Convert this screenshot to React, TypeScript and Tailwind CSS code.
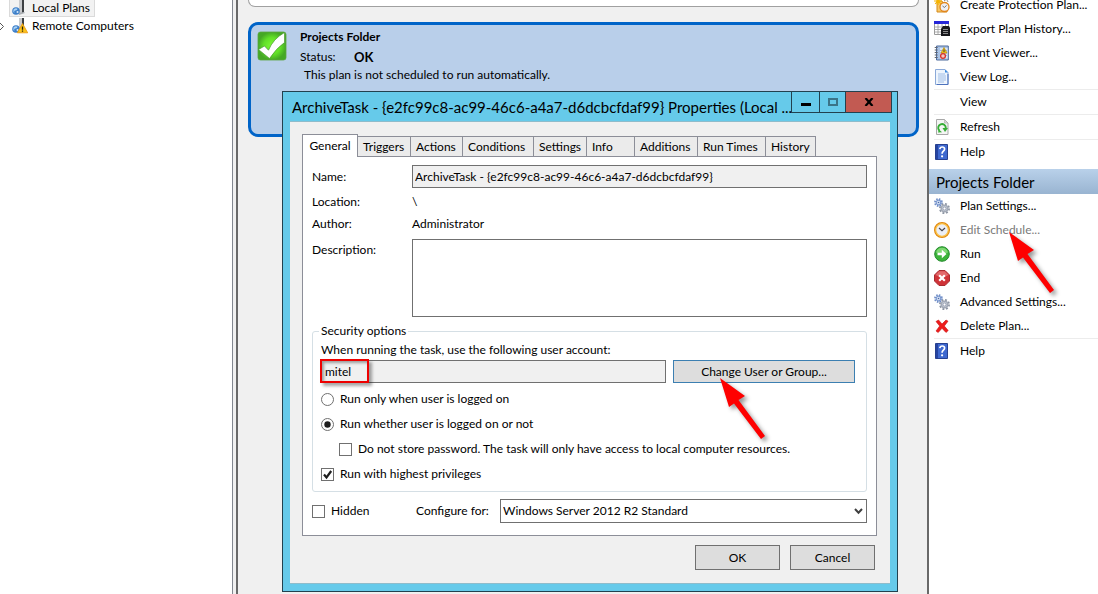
import React from 'react';

const tabs = [
  { label: 'Triggers', width: 'w-[53px]' },
  { label: 'Actions', width: 'w-[52px]' },
  { label: 'Conditions', width: 'w-[71px]' },
  { label: 'Settings', width: 'w-[53px]' },
  { label: 'Info', width: 'w-[48px]' },
  { label: 'Additions', width: 'w-[63px]' },
  { label: 'Run Times', width: 'w-[68px]' },
  { label: 'History', width: 'w-[50px]' },
];

/* ---------- Icons ---------- */

const ServerShape = () => (
  <>
    <path d="M7 0h5v12l-5 2z" fill="#6d7073" />
    <path d="M7 0h3v13l-3 1z" fill="#c9cbce" />
    <path d="M10 0h2v12l-2 1z" fill="#3d4043" />
    <path d="M6 13l6-1 1 1-6 2z" fill="#a9adb1" />
    <circle cx="4" cy="11" r="3.8" fill="#3d7fc9" />
    <path d="M1.5 9.5q2-2 4-.8q0 1.500-2 1.800t-1 2.500q-1.800-1-1-3.500z" fill="#a9d2f5" />
    <circle cx="5.500" cy="12" r="1" fill="#d5e9fa" />
  </>
);

const ServerIcon = () => (
  <svg width="16" height="16" viewBox="0 0 16 16">
    <ServerShape />
  </svg>
);

const ServerWarningIcon = () => (
  <svg width="16" height="16" viewBox="0 0 16 16">
    <ServerShape />
    <path d="M10.500 5.500L15.700 14.800H5.300z" fill="#fcc419" stroke="#e8940c" strokeWidth=".8" strokeLinejoin="round" />
    <path d="M10.500 8.500v3.200M10.500 12.500v1.300" stroke="#2b2008" strokeWidth="1.300" />
  </svg>
);

const CreatePlanIcon = () => (
  <svg width="16" height="16" viewBox="0 0 16 16">
    <path d="M3 4h5l1 2h4v9H3z" fill="#f7c765" stroke="#d48a1c" />
    <path d="M4 0v8M0 4h8M1.200 1.200l5.600 5.600M6.800 1.200L1.200 6.800" stroke="#f5b400" strokeWidth="1.200" />
    <path d="M10 4q3-3 4 1" stroke="#8b8b8b" fill="none" />
    <circle cx="10.500" cy="10" r="4.500" fill="#eef0f5" stroke="#e2861d" strokeWidth="1.300" />
    <path d="M8.500 9l2 1.500 2-2.200" stroke="#777" fill="none" />
  </svg>
);

const ExportIcon = () => (
  <svg width="16" height="16" viewBox="0 0 16 16">
    <path d="M.5 1.500h14v12H.5z" fill="#fff" stroke="#9a9a9a" />
    <path d="M0 0h15v3H0z" fill="#2626d8" />
    <path d="M1 6h13M1 8.500h13M1 11h13M4 3v10M8 3v10M11.500 3v10" stroke="#9b9b9b" strokeWidth=".8" />
    <path d="M9 5h6l1 2v8H7V8z" fill="#17171b" />
    <path d="M9 8.500h5M9 10.500h5M9 12.500h5" stroke="#a8a8a8" strokeWidth=".8" />
  </svg>
);

const EventIcon = () => (
  <svg width="16" height="16" viewBox="0 0 16 16">
    <path d="M2.500 1h11.800v14H2.500z" fill="#a9c3e6" stroke="#4d6a9c" />
    <path d="M6 3h7.500v10.500H6z" fill="#dbe6f5" />
    <path d="M6 5.500h7M6 8h7M6 10.500h7" stroke="#7f9cc9" strokeWidth=".7" />
    <path d="M.7 2.500h3M.7 5h3M.7 7.500h3M.7 10h3M.7 12.500h3" stroke="#61666f" strokeWidth="1.100" />
    <path d="M10 2.500l3 5.500H7z" fill="#f7c71f" stroke="#b98b00" strokeWidth=".7" />
    <path d="M10 4.500v2.500" stroke="#333" />
    <circle cx="9" cy="11" r="2.400" fill="#f3c8c4" stroke="#d6332a" strokeWidth="1.300" />
  </svg>
);

const LogIcon = () => (
  <svg width="16" height="16" viewBox="0 0 16 16">
    <path d="M1.500.5h9.500l3 3v12H1.500z" fill="#eef5fd" stroke="#8ba9d8" />
    <path d="M11 .5v3h3z" fill="#3b8be0" />
    <path d="M4 5h7M4 7h8M4 9h8M4 11h8M4 13h6" stroke="#9fbde6" />
    <path d="M14 5v10.500H3" stroke="#4d72bd" fill="none" />
  </svg>
);

const RefreshIcon = () => (
  <svg width="16" height="16" viewBox="0 0 16 16">
    <path d="M2.500.5h8l3.500 3.500v11.500H2.500z" fill="#f4f5f4" stroke="#a8a8a8" />
    <path d="M10.500.5v3.500H14z" fill="#d8d8d8" stroke="#a8a8a8" strokeWidth=".6" />
    <path d="M5.300 11.500A3.800 3.800 0 1 1 11.800 9" stroke="#35ad35" strokeWidth="1.900" fill="none" />
    <path d="M8.500 9h5.500l-3 4z" fill="#35ad35" />
    <path d="M4 13.500l4-.2-3-2.800z" fill="#35ad35" />
  </svg>
);

const HelpIcon = () => (
  <svg width="16" height="16" viewBox="0 0 16 16">
    <path d="M1.500.5h12v15h-12z" fill="#3e68cf" stroke="#27408f" />
    <path d="M2 1h2v14H2z" fill="#2544a1" />
    <path d="M5.800 5.200q.3-2.200 2.500-2.200t2.300 2q0 1.300-1.300 2.200T8.100 9.700" stroke="#fff" strokeWidth="1.700" fill="none" />
    <circle cx="8.100" cy="12.300" r="1.100" fill="#fff" />
  </svg>
);

const GearsIcon = () => (
  <svg width="16" height="16" viewBox="0 0 16 16">
    <circle cx="4.500" cy="4.500" r="3.500" fill="none" stroke="#6d8cc6" strokeWidth="1.800" strokeDasharray="1.500 1.250" />
    <circle cx="4.500" cy="4.500" r="2.300" fill="#dbe6f7" stroke="#7b98cf" strokeWidth="1.200" />
    <circle cx="4.500" cy="4.500" r=".8" fill="#4c6aa8" />
    <circle cx="10.500" cy="10.500" r="4.600" fill="none" stroke="#8d95a3" strokeWidth="1.800" strokeDasharray="1.900 1.710" />
    <circle cx="10.500" cy="10.500" r="3.200" fill="#cfd5de" stroke="#a3aab7" strokeWidth="1.500" />
    <circle cx="10.500" cy="10.500" r="1.500" fill="#fff" stroke="#8089a0" strokeWidth=".7" />
  </svg>
);

const ClockIcon = () => (
  <svg width="16" height="16" viewBox="0 0 16 16">
    <circle cx="8" cy="8" r="7.100" fill="#eceef5" stroke="#e0870f" strokeWidth="1.800" />
    <circle cx="8" cy="8" r="6.300" fill="none" stroke="#fbc44a" strokeWidth="1.200" />
    <path d="M5 6l3 2.600L11 6" stroke="#45454d" strokeWidth="1.200" fill="none" />
  </svg>
);

const RunIcon = () => (
  <svg width="16" height="16" viewBox="0 0 16 16">
    <circle cx="8" cy="8" r="7.300" fill="#3cb43a" stroke="#238a2c" />
    <path d="M2 6.500a6.200 6.200 0 0 1 12 0q-6 2-12 0z" fill="#7fd873" />
    <path d="M3.500 6.700h4.300V3.800L12.500 8l-4.700 4.200V9.300H3.500z" fill="#fff" />
  </svg>
);

const EndIcon = () => (
  <svg width="16" height="16" viewBox="0 0 16 16">
    <path d="M5 .5h6L15.500 5v6L11 15.500H5L.5 11V5z" fill="#cf3338" stroke="#a82c30" />
    <path d="M5.300 1.300h5.400L14.500 5q-6 4-13 0z" fill="#e2696b" />
    <path d="M5.200 5.200l5.600 5.600M10.800 5.200l-5.600 5.600" stroke="#fff" strokeWidth="2.200" />
  </svg>
);

const DeleteIcon = () => (
  <svg width="16" height="16" viewBox="0 0 16 16">
    <path d="M2 3.500L4.500 2 8 6l4-4 2 1.200L10.300 8l3.900 4.500-2.200 2L8 10.300 4.200 14.500 2 13l3.700-5z" fill="#ee1c1c" stroke="#c81010" strokeWidth=".6" />
  </svg>
);

const SuccessIcon = () => (
  <svg width="30" height="30" viewBox="0 0 30 30" className="shrink-0">
    <defs>
      <radialGradient id="okFill">
        <stop offset="0" stopColor="#7dfa35" />
        <stop offset=".6" stopColor="#62e028" />
        <stop offset="1" stopColor="#45a825" />
      </radialGradient>
    </defs>
    <rect x="1" y="1" width="28" height="28" rx="2.500" fill="url(#okFill)" stroke="#5aa53f" strokeWidth=".8" />
    <path d="M1.500 18.500l6-3.500 4 4.200Q16 8 27.500 1.500v10Q19.500 17 12.500 27.500z" fill="#fff" stroke="#4c9a34" strokeWidth=".7" />
  </svg>
);

/* Red pointer drawn over the controls, tip in the top left corner */
const Arrow = ({ className }: { className: string }) => (
  <svg width="52" height="68" viewBox="0 0 52 68" className={`pointer-events-none absolute z-10 ${className}`}>
    <path
      d="M0 0L25 18L18.500 22L45 58L41 61L14 25.500L9 29z"
      fill="#fe0000"
      className="drop-shadow-[3px_3px_2px_rgba(0,0,0,0.4)]"
    />
  </svg>
);

/* ---------- Small building blocks ---------- */

interface ActionProps {
  icon?: React.ReactNode;
  label: string;
  disabled?: boolean;
}

const Action: React.FC<ActionProps> = ({ icon, label, disabled }) => (
  <button
    type="button"
    disabled={disabled}
    className="flex h-6 w-full items-center gap-2.5 pl-[5px] text-left whitespace-nowrap disabled:text-[#7a7a7a]"
  >
    <span className="w-4 shrink-0">{icon}</span>
    {label}
  </button>
);

const Separator = () => <div className="ml-[5px] h-px bg-[#ececec]" />;

interface ChoiceProps {
  type: 'radio' | 'checkbox';
  label: string;
  checked?: boolean;
}

const Choice: React.FC<ChoiceProps> = ({ type, label, checked }) => (
  <label className="flex items-center gap-1.5 whitespace-nowrap">
    <span className="relative flex h-[13px] w-[13px] shrink-0">
      <input
        type={type}
        name={type === 'radio' ? 'logon' : undefined}
        defaultChecked={checked}
        className={
          type === 'radio'
            ? 'peer h-[13px] w-[13px] appearance-none rounded-full border border-[#707070] bg-white'
            : 'peer h-[13px] w-[13px] appearance-none border border-[#707070] bg-white'
        }
      />
      <svg viewBox="0 0 13 13" className="pointer-events-none absolute inset-0 hidden peer-checked:block">
        {type === 'radio' ? (
          <circle cx="6.500" cy="6.500" r="3.200" fill="#1e1e1e" />
        ) : (
          <path d="M3 6.500l2.500 3L10.200 3" stroke="#1e1e1e" strokeWidth="2.200" fill="none" />
        )}
      </svg>
    </span>
    {label}
  </label>
);

/* ---------- Task dialog ---------- */

const TaskDialog = () => (
  <section className="absolute top-[91px] right-[24px] left-[44px] border border-[#22414f] bg-[#66caea] px-[7px] pb-[7px]">
    <header className="-mr-0.5 flex h-[29px] items-start">
      <h1 className="flex h-[29px] min-w-0 flex-1 items-center pl-0.5 text-[15px] whitespace-nowrap">
        ArchiveTask - {'{e2fc99c8-ac99-46c6-a4a7-d6dcbcfdaf99}'} Properties (Local ...
      </h1>
      <div className="-mt-px flex h-[22px] shrink-0 border border-[#22414f]">
        <button type="button" aria-label="Minimize" className="flex w-[28px] items-center justify-center border-r border-[#22414f]">
          <span className="mt-1 h-[3px] w-2.5 bg-black" />
        </button>
        <button type="button" aria-label="Maximize" className="flex w-[26px] items-center justify-center border-r border-[#22414f]">
          <span className="h-2 w-2.5 border-2 border-[#3b7488]" />
        </button>
        <button type="button" aria-label="Close" className="flex w-[45px] items-center justify-center bg-[#c25a52]">
          <svg width="10" height="8" viewBox="0 0 10 8">
            <path d="M1.500 0L8.500 8M8.500 0L1.500 8" stroke="#000" strokeWidth="2.200" />
          </svg>
        </button>
      </div>
    </header>

    <div className="border-y border-t-[#8fbccb] border-b-[#8fbccb] bg-[#f0f0f0] px-3 pt-3 pb-[13px]">
      {/* Tabs */}
      <div role="tablist" className="flex items-end pr-[1px]">
        <button
          type="button"
          role="tab"
          aria-selected="true"
          className="relative z-10 -mb-px flex h-[23px] w-[56px] items-center justify-center border border-b-0 border-[#8c8e98] bg-white"
        >
          General
        </button>
        {tabs.map((tab) => (
          <button
            key={tab.label}
            type="button"
            role="tab"
            className={`flex h-5 items-center border-t border-r border-[#8c8e98] bg-[#ebebeb] pl-[5px] whitespace-nowrap ${tab.width}`}
          >
            {tab.label}
          </button>
        ))}
      </div>

      <div className="mr-px border border-[#8c8e98] bg-white px-[9px] pt-2 pb-3">
        <div className="grid grid-cols-[100px_1fr] items-center">
          <label htmlFor="name">Name:</label>
          <input
            id="name"
            readOnly
            value="ArchiveTask - {e2fc99c8-ac99-46c6-a4a7-d6dcbcfdaf99}"
            className="h-[23px] w-full border border-[#707070] bg-[#f0f0f0] px-0.5"
          />
          <span className="mt-[3px] leading-[22px]">Location:</span>
          <span className="mt-[3px] leading-[22px]">\</span>
          <span className="leading-[22px]">Author:</span>
          <span className="leading-[22px]">Administrator</span>
          <label htmlFor="description" className="mt-1 self-start leading-[22px]">
            Description:
          </label>
          <textarea id="description" className="mt-1 block h-[78px] w-full resize-none border border-[#707070] bg-white" />
        </div>

        <fieldset className="mt-1.5 h-[169px] rounded-[3px] border border-[#d5dfe5] px-2">
          <legend className="-ml-0.5 px-0.5 leading-4">Security options</legend>
          <label htmlFor="account" className="mt-[3px] block leading-4">
            When running the task, use the following user account:
          </label>
          <div className="mt-0.5 flex gap-[7px] pr-[3px]">
            <div className="relative flex-1">
              <input
                id="account"
                readOnly
                value="mitel"
                className="h-[23px] w-full border border-[#707070] bg-[#f0f0f0] px-[3px]"
              />
              <span className="pointer-events-none absolute -top-px -left-px h-[24px] w-[49px] border-2 border-[#ee0000] shadow-[3px_3px_3px_rgba(0,0,0,0.35),inset_2px_2px_3px_rgba(0,0,0,0.35)]" />
            </div>
            <div className="relative">
              <button type="button" className="h-[23px] w-[182px] border border-[#3c7fb1] bg-[#dddddd]">
                Change User or Group...
              </button>
              <Arrow className="top-[18px] left-[47px]" />
            </div>
          </div>
          <div className="mt-2 flex flex-col gap-[9px] leading-4">
            <Choice type="radio" label="Run only when user is logged on" />
            <Choice type="radio" label="Run whether user is logged on or not" checked />
            <div className="pl-[18px]">
              <Choice type="checkbox" label="Do not store password. The task will only have access to local computer resources." />
            </div>
            <Choice type="checkbox" label="Run with highest privileges" checked />
          </div>
        </fieldset>

        <div className="mt-[7px] flex items-center">
          <div className="w-[104px]">
            <Choice type="checkbox" label="Hidden" />
          </div>
          <label htmlFor="configure" className="w-[84px] whitespace-nowrap">
            Configure for:
          </label>
          <div className="relative flex-1">
            <select id="configure" className="block h-[24px] w-full appearance-none border border-[#707070] bg-white pl-0.5">
              <option>Windows Server 2012 R2 Standard</option>
            </select>
            <svg width="9" height="7" viewBox="0 0 9 7" className="pointer-events-none absolute top-[9px] right-[4px]">
              <path d="M1 1l3.500 3.700L8 1" stroke="#404040" strokeWidth="2" fill="none" />
            </svg>
          </div>
        </div>
      </div>

      <div className="mt-[9px] flex justify-end gap-2.5 pr-[3px]">
        <button type="button" className="h-[25px] w-[85px] border border-[#707070] bg-[#dddddd]">
          OK
        </button>
        <button type="button" className="h-[25px] w-[85px] border border-[#707070] bg-[#dddddd]">
          Cancel
        </button>
      </div>
    </div>
  </section>
);

export default function App() {
  return (
    <div className="flex h-screen overflow-hidden bg-[#f0f0f0] font-['Lato','Open_Sans',sans-serif] text-[12px] leading-4 text-black">
      {/* Console tree */}
      <nav className="w-[233px] shrink-0 border-r border-[#828790] bg-white">
        <div className="ml-[9px] flex h-[17px] w-[86px] items-center gap-1 border border-t-0 border-[#dadada] bg-[#f2f2f2] pl-0.5 whitespace-nowrap">
          <ServerIcon />
          Local Plans
        </div>
        <div className="flex h-[18px] items-center whitespace-nowrap">
          <svg width="12" height="9" viewBox="0 0 12 9" className="shrink-0">
            <path d="M0 1L3.500 4.500L0 8" stroke="#555" fill="none" />
          </svg>
          <ServerWarningIcon />
          <span className="pl-1">Remote Computers</span>
        </div>
      </nav>

      {/* Plans */}
      <main className="relative ml-[3px] min-w-0 flex-1 border-l-2 border-[#696969] px-2.5">
        <div className="-mr-[7px] h-[7px] rounded-b-[10px] border border-t-0 border-[#a0a0a0] bg-white" />
        <article className="mt-[15px] -mr-[7px] flex h-[115px] gap-3 rounded-[10px] border-3 border-[#0064c8] bg-[#b9cfea] px-1.5 pt-1.5">
          <SuccessIcon />
          <div className="pl-px">
            <h2 className="-mt-0.5 font-bold">Projects Folder</h2>
            <p className="mt-0.5 flex leading-5">
              <span className="w-[54px]">Status:</span>
              <strong className="text-[13px]">OK</strong>
            </p>
            <p className="pl-1">This plan is not scheduled to run automatically.</p>
          </div>
        </article>
        <TaskDialog />
      </main>

      {/* Actions */}
      <aside className="relative ml-[5px] w-[171px] shrink-0 border-l-2 border-[#696969] bg-white">
        <div className="-mt-[7px]">
          <Action icon={<CreatePlanIcon />} label="Create Protection Plan..." />
          <Action icon={<ExportIcon />} label="Export Plan History..." />
          <Action icon={<EventIcon />} label="Event Viewer..." />
          <Action icon={<LogIcon />} label="View Log..." />
          <Separator />
          <Action label="View" />
          <Separator />
          <Action icon={<RefreshIcon />} label="Refresh" />
          <Separator />
          <Action icon={<HelpIcon />} label="Help" />
        </div>
        <h2 className="mt-[5px] flex h-[25px] items-center bg-linear-to-b from-[#b9d1ea] to-[#99b4d1] pl-[7px] text-[15px]">
          Projects Folder
        </h2>
        <Action icon={<GearsIcon />} label="Plan Settings..." />
        <div className="relative">
          <Action icon={<ClockIcon />} label="Edit Schedule..." disabled />
          <Arrow className="top-[14px] left-[80px]" />
        </div>
        <Action icon={<RunIcon />} label="Run" />
        <Action icon={<EndIcon />} label="End" />
        <Action icon={<GearsIcon />} label="Advanced Settings..." />
        <Action icon={<DeleteIcon />} label="Delete Plan..." />
        <Separator />
        <Action icon={<HelpIcon />} label="Help" />
      </aside>
    </div>
  );
}
